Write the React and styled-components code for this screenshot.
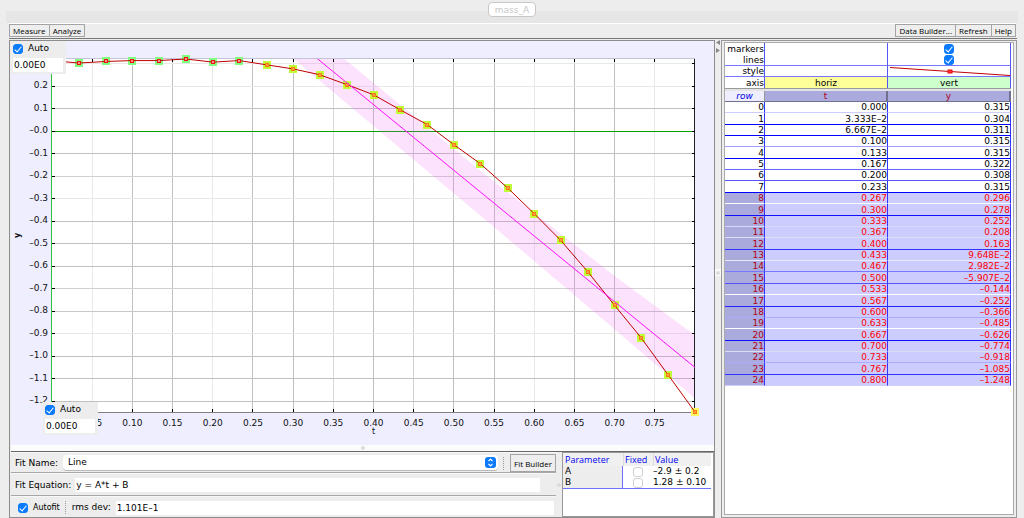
import React, { useLayoutEffect, useRef, useState } from 'react';
import styled, { createGlobalStyle } from 'styled-components';

const GlobalStyle = createGlobalStyle`
  * {
    box-sizing: border-box;
  }
  body {
    margin: 0;
    background: #ededed;
    color: #000;
    font: 9px/11px "DejaVu Sans", Verdana, sans-serif;
  }
  button, input, select {
    font: inherit;
    color: inherit;
    margin: 0;
  }
`;

const Page = styled.div`
  height: 100vh;
  min-height: 420px;
  display: flex;
  flex-direction: column;
`;

const TabBar = styled.header`
  height: 23px;
  margin: 0 6px;
  padding-top: 2px;
  display: flex;
  justify-content: center;
  align-items: flex-start;
  background: linear-gradient(#ededed 11px, #e6e6e6 11px);
`;

const Tab = styled.button`
  height: 15px;
  padding: 0 6px;
  border: 1px solid #c8c8c8;
  border-radius: 4px;
  background: #fff;
  color: #c8c8c8;
  line-height: 15px;
`;

const Toolbar = styled.nav`
  height: 15px;
  margin: 0 8px 0 9px;
  display: flex;
  justify-content: space-between;
  border-top: 1px solid #fff;
`;

const ToolGroup = styled.div`
  display: flex;
  height: 13px;
`;

const ToolButton = styled.button`
  padding: 0 3px;
  border: 1px solid #a4a4a4;
  background: #eee;
  font: 500 8px/11px "Open Sans", "Noto Sans", sans-serif;
  white-space: nowrap;
  & + & {
    border-left-width: 0;
  }
`;

const Main = styled.main`
  flex: 1;
  min-height: 0;
  margin: 0 7px 0 9px;
  padding-top: 1px;
  display: flex;
  border-top: 1px solid #777;
`;

const LeftPanel = styled.section`
  flex: 1;
  min-width: 0;
  padding-left: 1px;
  display: flex;
  flex-direction: column;
  border: 1px solid #8c8c8c;
`;

const Plot = styled.div`
  position: relative;
  flex: 1;
  min-height: 0;
  display: flex;
  background: #eeeeff;
  svg {
    flex: 1;
    min-width: 0;
    height: 100%;
  }
`;

const AutoBox = styled.div`
  position: absolute;
  ${p => (p.$corner === 'top' ? 'top: 0; left: 0;' : 'bottom: 10px; left: 32px;')}
  width: 55px;
  height: 33px;
  padding: 2px;
  display: flex;
  flex-direction: column;
  justify-content: space-between;
  background: #ededed;
`;

const CheckLabel = styled.label`
  display: flex;
  align-items: center;
  gap: 5px;
  font-size: ${p => (p.$small ? '8px' : '9px')};
`;

const Check = styled.input.attrs({ type: 'checkbox' })`
  appearance: none;
  flex: none;
  width: 10px;
  height: 10px;
  display: grid;
  place-items: center;
  border: 1px solid #d0d0d0;
  border-radius: 3px;
  background: #fff;
  &:checked {
    border-color: #0a7aff;
    background: #0a7aff;
  }
  &:checked::after {
    content: '';
    width: 3px;
    height: 6px;
    margin-bottom: 1px;
    border: solid #fff;
    border-width: 0 1px 1px 0;
    transform: rotate(40deg);
  }
`;

const Field = styled.input.attrs({ type: 'text' })`
  flex: ${p => (p.$grow ? 1 : 'none')};
  min-width: 0;
  width: ${p => (p.$grow ? 'auto' : '50px')};
  height: 14px;
  padding: 0 1px;
  border: 0;
  background: #fff;
`;

const SplitBar = styled.div`
  height: 7px;
  display: flex;
  justify-content: center;
  align-items: center;
  background: #fcfcfc;
  border-bottom: 1px solid #666;
`;

const Dot = styled.span`
  width: 4px;
  height: 4px;
  border-radius: 2px;
  background: #dcdcdc;
`;

const FitPanel = styled.div`
  display: flex;
`;

const FitForm = styled.div`
  flex: 1;
  min-width: 0;
`;

const FitRow = styled.div`
  height: ${p => p.$h};
  padding: ${p => p.$pad};
  display: flex;
  align-items: center;
  gap: ${p => p.$gap};
  border-bottom: ${p => (p.$last ? '0' : '1px solid #a8a8a8')};
  border-top: 1px solid #f8f8f8;
`;

const Grip = styled.span`
  width: 2px;
  height: 13px;
  border-left: 1px dotted #999;
`;

const SelectBox = styled.div`
  position: relative;
  flex: 1;
  display: flex;
  svg {
    position: absolute;
    top: 2px;
    right: 2px;
    pointer-events: none;
  }
`;

const Select = styled.select`
  appearance: none;
  flex: 1;
  height: 16px;
  padding: 0 5px;
  border: 0;
  border-bottom: 1px solid #b8b8b8;
  border-radius: 4px;
  background: #fff;
`;

const FitButton = styled(ToolButton)`
  width: 46px;
  height: 18px;
  padding: 0;
`;

const ParamSplit = styled.div`
  width: 6px;
  display: flex;
  align-items: center;
  justify-content: center;
`;

const ParamBox = styled.div`
  width: 152px;
  padding-right: 2px;
  border: 1px solid #999;
  background: #fff;
`;

const ParamTable = styled.table`
  width: 100%;
  table-layout: fixed;
  border-collapse: separate;
  border-spacing: 0;
  border-bottom: 1px solid #7070ff;
  th, td {
    height: 11px;
    padding: 0 2px;
    text-align: left;
    white-space: nowrap;
  }
  th {
    height: 13px;
    color: #0000f0;
    background: #f0f0f0;
    font: 500 9px/12px "Open Sans", "Noto Sans", sans-serif;
  }
  td:last-child {
    padding: 0;
  }
  th + th {
    padding: 0 1px;
    border-left: 1px solid #ddd;
  }
  td:first-child {
    background: #ededed;
    border-right: 1px solid #7070ff;
  }
  input {
    margin: 0 auto;
  }
`;

const Divider = styled.div`
  width: 6px;
  padding-bottom: 26px;
  display: flex;
  flex-direction: column;
  align-items: center;
  svg {
    flex: none;
  }
`;

const DividerGrip = styled.div`
  margin: auto 0;
  width: 6px;
  height: 7px;
  display: grid;
  place-items: center;
  background: #fafafa;
`;

const RightPanel = styled.section`
  width: 296px;
  padding: 1px 2px 2px;
  display: flex;
  border: 1px solid #999;
`;

const RightInner = styled.div`
  flex: 1;
  background: #fff;
  border: 1px solid #aaa;
  padding-right: 2px;
`;

const Table = styled.table`
  width: 100%;
  table-layout: fixed;
  border-collapse: separate;
  border-spacing: 0;
  th, td {
    padding: 0;
    line-height: 10px;
    font-weight: 400;
    text-align: right;
    white-space: nowrap;
    overflow: hidden;
  }
`;

const StyleTable = styled(Table)`
  tr {
    height: 11px;
  }
  tr:first-child {
    height: 12px;
  }
  th, td {
    border-right: 1px solid #5555f5;
  }
  tr:nth-child(2) > *, tr:nth-child(3) > * {
    border-bottom: 1px solid #7777ff;
  }
  td {
    text-align: center;
  }
  input {
    margin: 0 auto;
  }
  svg {
    display: block;
    width: 100%;
    height: 10px;
  }
`;

const AxisCell = styled.td`
  background: ${p => p.$bg};
`;

const TableSplit = styled.div`
  height: 3px;
  background: #e4e4e4;
  border-top: 1px solid #999;
`;

const DataTable = styled(Table)`
  thead th {
    height: 11px;
    text-align: center;
    color: #b00020;
    background: #aaaadd;
    border-right: 2px solid #707090;
    border-bottom: 1px solid #707090;
  }
  thead th:first-child {
    color: #0000e0;
    font-style: italic;
    background: #eeeeff;
    border-right: 1px solid #999;
  }
`;

const DataRow = styled.tr`
  height: 11px;
  color: ${p => (p.$selected ? '#ff0000' : '#000')};
  background: ${p => (p.$selected ? '#ccccff' : '#fff')};
  &:nth-child(8n + 2), &:nth-child(8n + 5), &:nth-child(8n) {
    height: 12px;
  }
  th, td {
    vertical-align: bottom;
    border-right: 1px solid #3333ff;
    border-bottom: 1px solid ${p => p.$rule};
  }
  th {
    color: ${p => (p.$selected ? '#b00010' : '#000')};
    background: ${p => (p.$selected ? '#aaaadd' : '#fff')};
  }
`;

const T = ['0.000', '3.333E-2', '6.667E-2', '0.100', '0.133', '0.167', '0.200', '0.233', '0.267',
  '0.300', '0.333', '0.367', '0.400', '0.433', '0.467', '0.500', '0.533', '0.567', '0.600',
  '0.633', '0.667', '0.700', '0.733', '0.767', '0.800'];

const Y = ['0.315', '0.304', '0.311', '0.315', '0.315', '0.322', '0.308', '0.315', '0.296',
  '0.278', '0.252', '0.208', '0.163', '9.648E-2', '2.982E-2', '-5.907E-2', '-0.144', '-0.252',
  '-0.366', '-0.485', '-0.626', '-0.774', '-0.918', '-1.085', '-1.248'];

// separator colour under each row
const RULES = ['#ccccff', '#0000ff', '#0000ff', '#a0a0ff', '#0000ff', '#6666ff', '#5555f8',
  '#0000ff', '#ffffff', '#1111ff', '#d8d8ff', '#ddddf4', '#3333ff', '#e8e8ff', '#7777ff',
  '#5555f5', '#ffffff', '#2222ff', '#aaaaff', '#ffffff', '#1111ff', '#ddddf0', '#aaaaff',
  '#3333ff', '#ccccff'];

const FIRST_SELECTED = 8;

const dash = s => s.replace(/-/g, '–');

const STRONG = '#c0c0c0';
const LIGHT = '#e8e8e8';

const X_TICKS = [
  [0.05, LIGHT], [0.1, STRONG], [0.15, STRONG], [0.2, LIGHT], [0.25, STRONG],
  [0.3, STRONG], [0.35, '#d8d8d8'], [0.4, STRONG], [0.45, '#d0d0d0'], [0.5, STRONG],
  [0.55, STRONG], [0.6, LIGHT], [0.65, STRONG], [0.7, STRONG], [0.75, LIGHT],
];

const Y_TICKS = [
  [0.3, LIGHT], [0.2, LIGHT], [0.1, STRONG], [0, '#00a000'], [-0.1, STRONG], [-0.2, '#d0d0d0'],
  [-0.3, LIGHT], [-0.4, STRONG], [-0.5, STRONG], [-0.6, STRONG], [-0.7, '#d0d0d0'],
  [-0.8, '#c8c8c8'], [-0.9, LIGHT], [-1, STRONG], [-1.1, STRONG], [-1.2, STRONG],
];

const BAND = [
  [0.3638, 0.322], [0.5333, -0.176], [0.7, -0.643], [0.8, -0.907],
  [0.8, -1.188], [0.7, -0.88], [0.5333, -0.375], [0.3007, 0.322],
];

const MARGIN = { left: 41, right: 19, top: 18, bottom: 33 };

function Chart() {
  const ref = useRef(null);
  const [size, setSize] = useState({ w: 0, h: 0 });

  useLayoutEffect(() => {
    const measure = () => {
      const box = ref.current.getBoundingClientRect();
      setSize({ w: box.width, h: box.height });
    };
    measure();
    const observer = new ResizeObserver(measure);
    observer.observe(ref.current);
    return () => observer.disconnect();
  }, []);

  const left = MARGIN.left;
  const top = MARGIN.top;
  const right = size.w - MARGIN.right;
  const bottom = size.h - MARGIN.bottom;
  const sx = t => left + (t / 0.8) * (right - left);
  const sy = y => top + ((0.322 - y) / 1.57) * (bottom - top);
  const snap = v => Math.floor(v) + 0.5;
  const points = T.map((t, i) => [sx(Number(t)), sy(Number(Y[i]))]);

  return (
    <svg ref={ref} role="img" aria-label="y versus t">
      {size.w > 0 && (
        <>
          <rect x={left} y={top} width={right - left} height={bottom - top} fill="#fff" />
          {X_TICKS.map(([v, c]) => (
            <line key={v} x1={snap(sx(v))} x2={snap(sx(v))} y1={top} y2={bottom} stroke={c} />
          ))}
          {Y_TICKS.map(([v, c]) => (
            <line key={v} x1={left} x2={right} y1={snap(sy(v))} y2={snap(sy(v))} stroke={c} />
          ))}
          <polygon
            points={BAND.map(([t, y]) => sx(t) + ',' + sy(y)).join(' ')}
            fill="#f060f0"
            fillOpacity="0.18"
          />
          <path d={`M${left} ${top - 0.5}H${right}`} stroke="#c4c4d8" />
          <path d={`M${left} ${bottom + 0.5}H${right}`} stroke="#808080" />
          <path d={`M${right - 0.5} ${top}V${bottom}`} stroke="#222" />
          <path d={`M${left - 0.5} ${top}V${bottom}`} stroke="#30c040" />
          {X_TICKS.map(([v]) => (
            <path
              key={v}
              d={`M${snap(sx(v))} ${top}v3M${snap(sx(v))} ${bottom}v-3`}
              stroke="#000"
            />
          ))}
          {Y_TICKS.map(([v]) => (
            <path
              key={v}
              d={`M${left} ${snap(sy(v))}h3M${right} ${snap(sy(v))}h-3`}
              stroke="#000"
            />
          ))}
          {points.map(([x, y], i) => {
            const picked = i >= FIRST_SELECTED;
            const last = i === points.length - 1;
            return (
              <rect
                key={i}
                x={Math.round(x) - 3}
                y={Math.round(y) - 3}
                width="6"
                height="6"
                fill={picked ? '#e8d040' : '#fff'}
                stroke={last ? '#fff860' : picked ? '#c0ff38' : '#80ff80'}
                strokeWidth="2"
              />
            );
          })}
          <polyline points={points.map(p => p.join(',')).join(' ')} fill="none" stroke="#c00000" />
          {points.map(([x, y], i) => (
            <rect
              key={i}
              x={Math.round(x) - 1.5}
              y={Math.round(y) - 1.5}
              width="3"
              height="3"
              fill={i >= FIRST_SELECTED ? '#f8a040' : '#ff9090'}
              stroke={i >= FIRST_SELECTED ? '#ff7818' : '#f01010'}
            />
          ))}
          <line x1={sx(0.3306)} y1={sy(0.322)} x2={sx(0.8)} y2={sy(-1.05)} stroke="#ff10ff" />
          <g fontSize="9" fill="#111">
            {X_TICKS.map(([v]) => (
              <text key={v} x={sx(v)} y={bottom + 14} textAnchor="middle">{v.toFixed(2)}</text>
            ))}
            {Y_TICKS.map(([v]) => (
              <text key={v} x={left - 4} y={sy(v) + 2} textAnchor="end">
                {v === 0 ? '–0.0' : dash(v.toFixed(1))}
              </text>
            ))}
            <text x={(left + right) / 2} y={bottom + 22} textAnchor="middle" fontSize="8">t</text>
            <text
              transform={`translate(9 ${(top + bottom) / 2}) rotate(-90)`}
              textAnchor="middle"
              fontWeight="700"
              fontSize="8"
            >
              y
            </text>
          </g>
        </>
      )}
    </svg>
  );
}

function AutoLimit({ corner, name }) {
  return (
    <AutoBox $corner={corner}>
      <CheckLabel><Check defaultChecked />Auto</CheckLabel>
      <Field defaultValue="0.00E0" aria-label={name} />
    </AutoBox>
  );
}

function FitControls() {
  return (
    <FitPanel>
      <FitForm>
        <FitRow $h="21px" $pad="1px 0 0 4px" $gap="5px">
          <label htmlFor="fit-name">Fit Name:</label>
          <SelectBox>
            <Select id="fit-name" defaultValue="Line">
              <option>Line</option>
              <option>Parabola</option>
            </Select>
            <svg width="11" height="11" viewBox="0 0 11 11">
              <rect width="11" height="11" rx="3" fill="#0a7aff" />
              <path d="M3.5 4.2l2-2 2 2M3.5 6.8l2 2 2-2" fill="none" stroke="#fff" strokeWidth="1.2" />
            </svg>
          </SelectBox>
          <Grip />
          <FitButton>Fit Builder</FitButton>
        </FitRow>
        <FitRow $h="23px" $pad="1px 16px 0 4px" $gap="4px">
          <label htmlFor="fit-equation">Fit Equation:</label>
          <Field id="fit-equation" $grow defaultValue="y = A*t + B" />
        </FitRow>
        <FitRow $h="21px" $pad="1px 2px 0 7px" $gap="5px" $last>
          <CheckLabel $small><Check defaultChecked />Autofit</CheckLabel>
          <Grip />
          <label htmlFor="rms-dev">rms dev:</label>
          <Field id="rms-dev" $grow defaultValue={dash('1.101E-1')} />
        </FitRow>
      </FitForm>
      <ParamSplit><Dot /></ParamSplit>
      <ParamBox>
        <ParamTable>
          <colgroup>
            <col style={{ width: 60 }} />
            <col style={{ width: 30 }} />
            <col />
          </colgroup>
          <thead>
            <tr><th>Parameter</th><th>Fixed</th><th>Value</th></tr>
          </thead>
          <tbody>
            <tr>
              <td>A</td>
              <td><Check aria-label="Fix A" /></td>
              <td>–2.9 ± 0.2</td>
            </tr>
            <tr>
              <td>B</td>
              <td><Check aria-label="Fix B" /></td>
              <td>1.28 ± 0.10</td>
            </tr>
          </tbody>
        </ParamTable>
      </ParamBox>
    </FitPanel>
  );
}

function DataPanel() {
  const columns = (
    <colgroup>
      <col style={{ width: 40 }} />
      <col />
      <col />
    </colgroup>
  );
  return (
    <RightPanel>
      <RightInner>
        <StyleTable>
          {columns}
          <tbody>
            <tr><th>markers</th><td /><td><Check defaultChecked aria-label="markers" /></td></tr>
            <tr><th>lines</th><td /><td><Check defaultChecked aria-label="lines" /></td></tr>
            <tr>
              <th>style</th>
              <td />
              <td>
                <svg viewBox="0 0 122 10" preserveAspectRatio="none">
                  <path d="M2 1.5L122 9.5" stroke="#c00000" />
                  <rect x="60" y="4" width="4" height="3" fill="#f04040" stroke="#f00000" />
                </svg>
              </td>
            </tr>
            <tr>
              <th>axis</th>
              <AxisCell $bg="#ffff99">horiz</AxisCell>
              <AxisCell $bg="#ccffcc">vert</AxisCell>
            </tr>
          </tbody>
        </StyleTable>
        <TableSplit />
        <DataTable>
          {columns}
          <thead>
            <tr><th>row</th><th>t</th><th>y</th></tr>
          </thead>
          <tbody>
            {T.map((t, i) => (
              <DataRow key={i} $selected={i >= FIRST_SELECTED} $rule={RULES[i]}>
                <th scope="row">{i}</th>
                <td>{dash(t)}</td>
                <td>{dash(Y[i])}</td>
              </DataRow>
            ))}
          </tbody>
        </DataTable>
      </RightInner>
    </RightPanel>
  );
}

export default function App() {
  return (
    <>
      <GlobalStyle />
      <Page>
        <TabBar><Tab>mass_A</Tab></TabBar>
        <Toolbar>
          <ToolGroup>
            <ToolButton>Measure</ToolButton>
            <ToolButton>Analyze</ToolButton>
          </ToolGroup>
          <ToolGroup>
            <ToolButton>Data Builder...</ToolButton>
            <ToolButton>Refresh</ToolButton>
            <ToolButton>Help</ToolButton>
          </ToolGroup>
        </Toolbar>
        <Main>
          <LeftPanel>
            <Plot>
              <Chart />
              <AutoLimit corner="top" name="Vertical maximum" />
              <AutoLimit corner="bottom" name="Horizontal minimum" />
            </Plot>
            <SplitBar><Dot /></SplitBar>
            <FitControls />
          </LeftPanel>
          <Divider>
            <svg width="6" height="13" viewBox="0 0 6 13">
              <path d="M5 0v5L1 2.5zM1 8v5l4-2.5z" fill="#888" />
            </svg>
            <DividerGrip><Dot /></DividerGrip>
          </Divider>
          <DataPanel />
        </Main>
      </Page>
    </>
  );
}
